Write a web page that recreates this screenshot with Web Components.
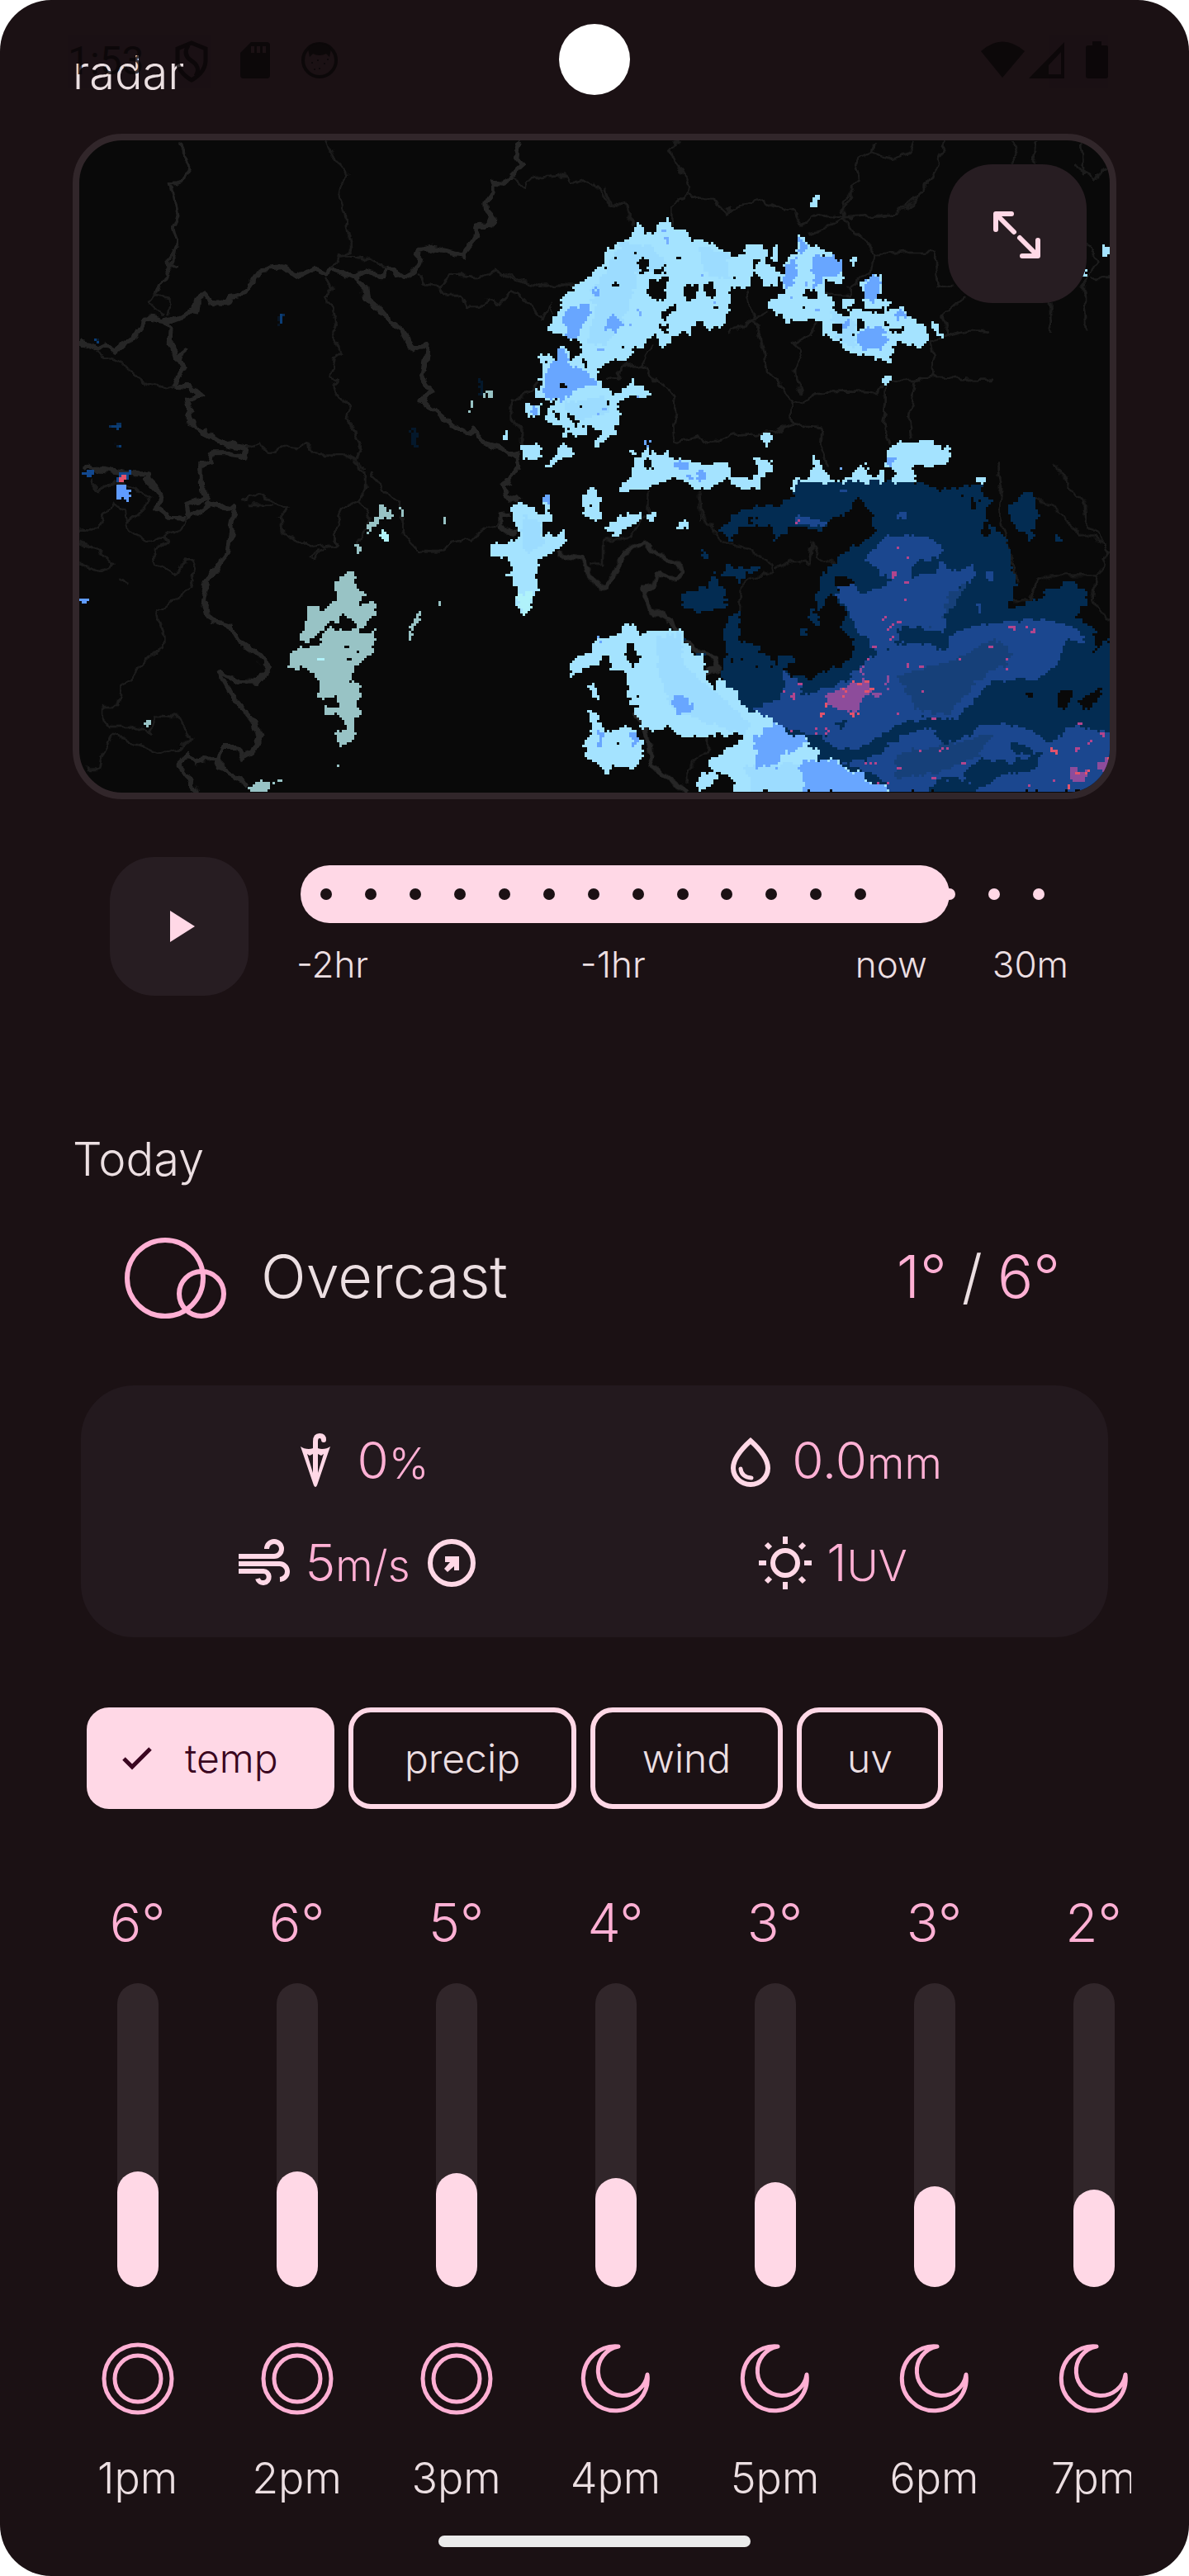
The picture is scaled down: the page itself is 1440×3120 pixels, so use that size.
<!DOCTYPE html>
<html lang="en">
<head>
<meta charset="utf-8">
<meta name="viewport" content="width=device-width, initial-scale=1">
<title>Weather</title>
<style>
  body { margin: 0; background: #ffffff; font-family: Inter, Lato, sans-serif; font-weight: 300; color: #ecdfe2; }
</style>
</head>
<body>
<weather-app>
  <status-bar slot="status"></status-bar>
  <radar-section></radar-section>
  <today-section></today-section>
  <chip-row></chip-row>
  <hour-list></hour-list>
</weather-app>

<script>
const define = (name, html, setup) => {
  customElements.define(name, class extends HTMLElement {
    constructor() {
      super();
      this.attachShadow({ mode: 'open' });
    }
    connectedCallback() {
      this.shadowRoot.innerHTML = '<style>*{box-sizing:border-box}h1,h2,p{margin:0;font-weight:inherit}svg{display:block}button{font:inherit;color:inherit;border:0;padding:0;margin:0}</style>' +
        (typeof html === 'function' ? html(this) : html);
      if (setup) setup(this);
    }
  });
};

/* Shell: rounded screen, status bar and camera above the scrolled content, gesture bar below */
define('weather-app', `
<style>
  :host { display: block; position: relative; overflow: hidden; background: #1b1114; border-radius: 62px; padding: 54px 0 86px; }
  .camera { position: absolute; top: 29px; left: 50%; margin-left: -43px; width: 86px; height: 86px; border-radius: 50%; background: #fff; }
  .home { position: absolute; bottom: 35px; left: 50%; margin-left: -189px; width: 378px; height: 14px; border-radius: 7px; background: #ebebeb; }
</style>
<slot></slot>
<slot name="status"></slot>
<div class="camera"></div>
<div class="home"></div>`);

define('status-bar', `
<style>
  :host { position: absolute; top: 48px; left: 82px; right: 98px; height: 52px; display: flex; align-items: center; color: #090607; font: 48px/52px Roboto, sans-serif; opacity: .8; }
  .icons { display: flex; gap: 38px; margin-left: 36px; }
  .system { display: flex; margin-left: auto; }
</style>
<span>1:53</span>
<div class="icons">
  <svg width="42" height="52" viewBox="0 0 42 52" fill="none" stroke="currentColor" stroke-width="5"><path d="M21 4L38 11V26Q37 40 21 49Q5 40 4 26V11Z"/><path d="M17 7Q10 18 20 25Q33 33 26 44"/></svg>
  <svg width="36" height="52" viewBox="0 0 36 52"><path fill="currentColor" fill-rule="evenodd" d="M13 3H32Q36 3 36 7V43Q36 47 32 47H4Q0 47 0 43V16ZM13 8V16H17V8ZM20 8V16H24V8ZM27 8V16H31V8Z"/></svg>
  <svg width="44" height="52" viewBox="0 0 44 52"><circle cx="22" cy="25" r="20" fill="none" stroke="currentColor" stroke-width="4"/><path fill="currentColor" d="M8 11Q22-2 36 11L34 21L30 17Q22 21 14 17L10 21Z"/><g fill="currentColor"><circle cx="13" cy="28" r="1"/><circle cx="20" cy="25" r="1"/><circle cx="28" cy="29" r="1"/><circle cx="22" cy="35" r="1"/><circle cx="32" cy="24" r="1"/><circle cx="16" cy="36" r="1"/></g></svg>
</div>
<div class="system">
  <svg width="158" height="52" viewBox="0 0 158 52" fill="currentColor"><path d="M4 14Q30-9 57 14L30 46Z"/><path fill-rule="evenodd" d="M105 3V47H62ZM101 15L86 31V42H101Z"/><path d="M139 2H150V7H156Q158 7 158 10V44Q158 47 155 47H134Q131 47 131 44V10Q131 7 134 7H139Z"/></svg>
</div>`);

define('icon-button', el => `
<style>
  :host { display: block; flex: none; width: 168px; height: 168px; }
  button { display: block; width: 100%; height: 100%; background: #271d22; border-radius: 54px; color: #ffd8e6; cursor: pointer; }
</style>
<button aria-label="${el.getAttribute('label')}"><svg width="168" height="168" viewBox="0 0 168 168">${el.getAttribute('kind') === 'play'
  ? '<path fill="currentColor" d="M73 65L103 84L73 103Z"/>'
  : '<path fill="none" stroke="currentColor" stroke-width="6" stroke-linecap="round" stroke-linejoin="round" d="M80 82L59 61M58 79V60H77M87 89L108 110M109 92V111H90"/>'}</svg></button>`);

/* Radar picture: each tile group has its own grid, mapped on to the 1248 x 790 view */
const A = 'translate(-16 -20) scale(.40816 .33333)';
const B = 'translate(504 60) scale(.38265 .33333)';
const C = 'translate(-16 390) scale(.40816 .33333)';
const D = 'translate(504 390) scale(.48469 .33333)';
const E = 'translate(624 -170) scale(.45918 .33333)';
const shape = (t, fill, d) => `<path transform="${t}" fill="${fill}" d="${d}"/>`;
const line = (t, cls, d) => `<path transform="${t}" class="${cls}" d="${d}"/>`;
const specks = (t, fill, w, list) => shape(t, fill, list.trim().split(' ').map(p => { const [x, y] = p.split(','); return `M${x} ${y}h${w}v10h-${w}Z`; }).join(''));

const borders =
  line(A, 'major', 'M1350 63L1335 120L1355 150L1320 190L1300 215L1268 212L1268 250L1248 290L1250 315L1268 340L1258 370L1225 365L1218 415L1200 440L1175 480L1125 462L1085 452L1052 462L1045 500L1025 545L1003 560L958 520L935 550L890 535L855 560L825 545L790 530L770 545L735 525L685 557L640 520L580 525L545 590L520 620L490 630L480 655L425 650L410 622L390 640L385 680L330 705L290 718L240 705L205 780L170 800L145 828L115 805L90 820L40 795M290 718L310 740L308 800L340 860L350 885L322 950L370 955L400 985L360 1000L372 1045L355 1075L400 1110L420 1135L480 1165L535 1180L530 1215L480 1195L435 1195L430 1230L400 1240V1260M350 815L340 860M855 560L885 600L890 640L940 680L960 715L1000 750L1030 820L1072 800L1065 860L1055 920L1080 965L1055 1000L1100 1045L1150 1100L1190 1125L1215 1115L1230 1155L1290 1180L1340 1210L1350 1255') +
  line(C, 'major', 'M400 0L402 100L425 130L360 155L365 205L305 200L270 165L280 110L240 60L240 40L180 40L100 25L70 10L50 25M365 205L425 150L500 165L490 250L480 330L420 430L408 520L430 575L490 595L515 650L560 690L605 745L570 798L510 795L455 760L500 860L560 945L572 1000L555 1050L525 1070L510 1035L460 1035L455 1075L455 1110L540 1170M450 1075L385 1090L365 1065L335 1100L360 1140L385 1200M1350 0L1315 65L1290 85L1310 120L1350 140M1320 185L1285 190L1285 225L1300 250L1340 255') +
  line(D, 'major', 'M150 335L215 350L235 410L270 462L300 400L325 325L370 290L410 340L460 370L470 400L450 425L405 405L395 450L370 460L385 530L440 580L450 610L500 680L550 710L560 745L525 770M345 900L380 990L390 1100L440 1155L480 1200') +
  line(A, 'middle', 'M335 63L368 160L345 205L310 215L335 330L320 380L332 440L320 490L300 550L262 620M335 520L300 500L320 460') +
  line(A, 'minor', 'M262 620L240 640L290 700M262 620L310 630L298 700M770 63L800 130L838 185L810 250L830 330L848 440L835 475L810 480L790 530M835 480L890 490L960 520M770 560L790 600L765 635L785 660L800 730L790 760L818 830L795 850L785 920L805 930L790 960L840 1035L835 1075L855 1110L878 1190L865 1230L880 1255M1040 545L1070 585L1110 595L1140 550L1220 555L1275 535L1330 560L1400 590L1450 585L1520 580M1110 595L1125 625L1170 625L1190 665L1235 665L1255 635L1290 655L1320 605L1350 625L1390 670L1410 710L1435 660L1445 690M1325 190L1360 230L1370 205L1420 190L1490 185L1500 215L1540 205L1568 215M90 830L160 865L230 940L300 960L325 955M535 1175L580 1160L595 1190L640 1175L690 1180L710 1150L745 1205L830 1205L870 1230M1400 940L1370 980L1325 1010L1320 1070L1355 1120L1350 1190') +
  line(C, 'minor', 'M40 245L95 243L110 190L140 150L175 175L185 245L240 290L290 265L300 290L260 320L265 370L325 410L360 350L380 370L370 455L270 540L290 630L290 670L230 720L165 820L155 885L110 885L110 930L130 960L190 960L245 985L270 920L330 925L370 1000L340 1035L280 1055L200 1020L140 990L110 1060L100 1115L60 1115M40 290L90 315L140 370L100 390L40 370M70 60L100 105L150 65L250 130L215 190L180 215M290 265L330 250L360 200M155 430L190 448M525 140L575 115L620 150L660 165L635 200L640 265L690 285L730 310L800 300L800 230L820 165L870 140L890 90L890 60L860 0M770 310L735 350L722 335L750 325M540 155H610M870 140L905 200L880 270L860 300M905 35L940 100L990 150L1000 260L1050 325L1110 325L1150 290L1200 275L1240 240L1285 215') +
  line(B, 'minor', 'M345 0L365 50L405 55L440 125M560 120L560 60L605 10L640 35L690 30L725 85L770 60L850 40L900 65L945 75L965 130L1000 90L1105 100L1155 95L1215 90L1270 85L1320 50L1355 0M1105 100L1100 50L1135 0M990 165L1105 105L1130 150L1170 180L1205 235L1195 290L1120 350L1120 385L1040 380M1205 235L1300 225L1385 225L1400 350L1450 345M1490 380L1410 460L1430 530L1500 510L1568 515M1430 530L1380 550L1390 680L1330 690L1255 690L1235 690L1210 735L1120 730L1020 735L965 780L945 770M1390 680L1568 690M790 365L800 430L820 460L850 580L860 660L900 710L940 760L940 850L1035 860L1030 930L1050 1000M740 520L860 440M500 560L465 635L400 640L390 690L350 680M465 635L500 680L550 730L575 810L560 860L565 915L640 900L675 920L750 895L880 880L940 850M1010 490L1000 530L945 560L970 590L945 660L970 745M1235 700L1235 780L1225 860L1250 920M1330 690L1310 820L1315 910M0 290L50 325L140 350L300 340M485 1100L490 1200M645 1095L650 1200') +
  line(D, 'minor', 'M385 100L380 180L340 270L270 290L270 370L235 365M510 110L515 190L570 290L640 320L690 370L695 400L640 420L610 470L610 560M700 385L740 360L785 370L790 285L805 340L850 370L870 420M1255 0L1265 90L1260 180L1280 300L1300 430M1395 0L1430 80L1470 150L1475 220L1510 270L1530 330L1520 380L1500 410L1390 410L1350 430L1340 500L1290 500M1345 130L1410 180L1450 250L1520 290M1500 410L1490 500L1530 580M530 1000L530 1050L480 1110L475 1170') +
  line(E, 'minor', 'M225 513L195 545L250 680L245 705M735 513L730 555L795 580L830 550L840 513M730 555L690 590L700 650L680 665L680 720L650 770M925 513L905 600L870 690L800 770M1100 513L1120 560L1100 595M1165 513L1160 595M1285 513L1290 640M1265 600L1315 650L1345 610M1200 1100L1205 1200M1300 880L1325 950L1290 1030L1300 1200M1310 1010L1358 1010M0 660L40 745L80 750L105 810');

const rain =
  /* light rain, north */
  shape(B, '#a4e3ff', 'M458 105L470 160L500 155L510 125L550 105L565 140L605 140L615 180L650 180L690 195L745 240L785 235L795 205L850 195L860 225L850 270L900 300L890 345L860 355L835 320L820 270L810 330L790 365L755 355L745 380L735 450L715 502L665 502L655 480L625 490L625 530L600 510L560 545L530 575L512 565L515 510L480 540L470 570L430 575L430 600L400 635L380 610L320 655L325 690L375 745L430 700L455 710L500 740L485 755L405 758L390 790L400 820L375 870L380 900L345 905L320 940L315 920L330 885L290 845L290 890L215 890L210 860L160 835L165 790L200 765L160 760L125 750L125 730L145 725L140 680L150 660L140 600L190 605L210 570L230 590L245 615L275 595L265 540L225 540L200 525L170 520L170 490L205 435L215 380L240 370L320 285L345 285L345 220L385 195L420 175ZM880 200L895 200L895 265L875 250Z') +
  shape(B, '#a4e3ff', 'M955 170L985 170L990 220L1015 205L1050 225L1095 260L1100 320L1085 345L1045 330L1045 385L1065 395L1075 440L1110 455L1140 425L1170 420L1165 370L1155 335L1200 305L1225 320L1225 375L1200 400L1260 400L1235 435L1290 430L1320 465L1370 500L1365 550L1340 575L1265 545L1255 630L1215 620L1180 600L1145 600L1110 585L1035 520L1040 490L1010 470L960 470L925 480L865 430L865 405L920 360L900 320L935 235L955 230ZM1100 400h25v32h-25ZM1130 250l15-8l8 15l-20 15ZM990 45L1025 20L1025 45L1005 65ZM1375 480L1395 490L1418 545L1400 530ZM1220 690L1245 670L1255 690L1240 715ZM835 900L865 882L880 905L855 935ZM95 780h50l-5 40l-20 15l-25-25ZM30 865l15 10v30h-15ZM85 925h62v50h-62ZM210 915L245 940L245 965L200 985L180 1020L160 1000L190 970ZM425 940l20 10l-15 15Z') +
  shape(B, '#a4e3ff', 'M475 915L487 915L487 960L500 960L505 945L520 970L545 945L555 975L610 980L640 985L660 1010L700 990L745 990L740 1040L780 1050L830 1040L830 990L800 970L880 990L875 1025L850 1035L835 1085L770 1085L720 1050L680 1090L640 1090L600 1055L560 1050L500 1070L485 1085L420 1090L405 1110L390 1085L430 1040L440 990L470 960ZM990 1050L1005 1030L1000 955L1035 1005L1070 1060L1100 1055L1145 1010L1175 1010L1195 1050L1230 1015L1235 1060L1250 1055L1265 1015L1240 1010L1235 950L1280 915L1320 920L1380 905L1400 935L1445 935L1435 995L1320 1005L1335 1060L950 1062L950 1100L942 1100L942 1050ZM1165 990l10-22l5 28ZM1520 1050l25-10v15l-20 10Z') +
  /* light rain, centre and south */
  shape(D, '#a4e3ff', 'M120 112L135 115L138 195L150 215L120 225L115 200L125 180ZM215 195L225 95L258 100L262 215L245 215L225 190ZM275 235L320 190L365 180L360 215L325 240L295 270ZM375 210L400 175L405 200L385 215ZM465 210L485 230L450 255ZM65 135L90 170L115 190L120 260L150 265L178 240L170 300L135 340L105 345L108 425L100 480L70 553L52 520L50 425L25 410L40 390L35 345L-14 340L-14 305L55 275L60 240L40 200L38 165ZM345 575L362 625L405 610L465 608L470 650L500 700L522 705L525 770L545 825L560 785L578 790L580 825L605 828L608 865L635 875L635 905L690 912L695 950L725 955L725 990L780 998L780 1035L808 1040L810 1080L865 1080L868 1120L922 1122L925 1162L982 1165L985 1200L608 1200L590 1150L540 1110L535 1080L610 1020L615 985L515 1000L460 995L430 955L415 975L370 970L350 920L335 900L330 800L330 770L290 750L285 700L250 730L195 770L185 780L185 740L200 705L240 690L240 650L290 640ZM235 820L250 805L260 860L250 868ZM220 895L245 905L265 940L270 975L340 965L370 1010L368 1070L345 1110L295 1110L275 1140L262 1100L225 1070L220 1020L240 990L235 930ZM500 1190L515 1125L550 1120L560 1160L530 1175L510 1200Z') +
  shape(B, '#9cdcff', 'M400 190L480 200L540 260L540 310L450 300L420 440L350 560L290 560L320 420L300 380ZM640 200L740 240L740 330L660 300ZM220 770L340 750L370 800L240 850ZM1060 430L1140 480L1140 580L1080 540Z') +
  shape(D, '#9cdcff', 'M400 640L460 620L470 740L520 800L600 900L640 960L620 990L440 900L410 780ZM620 1100L770 1090L775 1196L640 1196ZM65 180L115 230L120 300L80 330L65 300Z') +
  /* moderate rain */
  shape(B, '#68a6ff', 'M215 440L305 405L300 450L280 490L260 540L225 535ZM310 370l15-10v25l-12 5ZM360 460L380 450L390 475L415 480L395 500L380 515L350 505ZM200 575L225 600L240 640L290 660L325 700L240 730L215 770L150 740L160 660L180 630ZM105 790h30l-10 40ZM920 270L960 240L955 300L940 360L905 335ZM1000 235L1050 240L1090 250L1100 300L1040 325L1010 360ZM960 180h20v45h-20ZM1165 330L1200 310L1225 330L1220 375L1195 410L1170 400ZM1150 510L1220 490L1240 545L1225 585L1200 570L1170 585L1145 550ZM1265 445L1300 445L1295 470L1265 470ZM1100 480l25-10v30h-25ZM640 1020l30 10l-5 35l-25-10ZM570 990h40v20h-40ZM605 1040h18v15h-18ZM470 915h17v22h-17ZM1245 970h20v30h-20ZM155 1105h18v30h-18Z') +
  shape(D, '#68a6ff', 'M455 840L490 860L490 910L455 920L443 885ZM690 950L725 960L725 992L775 998L765 1035L720 1060L700 1100L655 1110L650 1040L640 1010ZM760 1085L865 1085L868 1122L922 1125L925 1165L980 1168L982 1200L775 1200ZM255 980l18 0l-5 50l-15-5ZM340 980l22 10l0 35l-25 0ZM255 640h12v15h-12ZM120 115h15v25h-12Z') +
  specks(B, '#74aeff', 10, '515,160 530,170 545,150 540,185 525,145 650,305 690,400 930,380 945,410 1015,430 975,340 450,430 425,480 330,575 440,750 320,800 340,790 1090,1005') +
  /* clear gaps */
  shape(B, '#090909', 'M445 255L485 250L490 300L455 300ZM480 335L515 330L540 310L540 405L500 400L480 370ZM590 350L640 340L640 395L600 400ZM655 345L690 330L695 400L660 375ZM525 440L575 415L575 440L530 470ZM520 490L550 490L545 520L525 510ZM275 620l15 0l0 30l-12 0ZM205 695h22v22h-22ZM230 810L260 830L250 850L230 840ZM185 810h15v25h-15ZM980 370L1020 360L1025 395L975 395ZM1150 425L1230 430L1235 450L1160 440ZM1145 475h22v25h-22ZM1250 505h40v15h-40ZM815 245h22v25h-22ZM1070 490h30v25h-30ZM470 975L500 985V1015L475 1015ZM500 290h30v20h-30Z') +
  specks(B, '#090909', 10, '375,235 438,230 568,242 535,275 540,288 375,338 750,318 660,422 690,422 515,432 450,540 395,568 155,620 185,620 348,768 268,790 230,862 275,862 972,422 1038,235 1088,540 1125,535 1235,475 305,1148 365,205') +
  shape(D, '#090909', 'M325 660h15l20 40l-15 50l-12-30Z') +
  specks(D, '#090909', 9, '350,850 345,880 335,895 412,940 296,1017 138,303 238,155') +
  /* snow field */
  shape(D, '#032c52', 'M750 72L1055 72L1110 100L1160 90L1220 75L1215 110L1235 145L1220 200L1280 280L1300 430L1280 540L1345 500L1430 430L1485 480L1450 570L1495 600L1500 700L1520 640L1545 650L1545 1200L985 1200L982 1165L925 1162L922 1122L868 1120L865 1080L810 1080L808 1040L780 1035L780 998L725 990L725 955L695 950L690 912L635 905L608 865L605 828L580 825L560 760L575 700L570 600L585 560L610 540L610 640L680 700L735 770L790 785L890 715L895 640L860 600L880 550L850 490L830 480L810 540L800 480L820 400L870 330L930 280L950 250L940 180L900 130L880 190L850 190L820 250L800 250L760 230L715 260L700 285L690 230L610 240L585 290L560 240L600 180L675 150L700 165L745 120ZM1285 150L1340 100L1355 190L1340 290L1290 220ZM1400 265h14v22h-14ZM460 480L530 450L545 400L570 460L580 530L500 545L465 520ZM570 380h90v20h-30l-20 45l-10-35h-30ZM780 540l20-10l15 60l-20 10ZM762 600h15v30h-15ZM710 700h35v35h-35ZM510 325l20 5l-5 25ZM465 608L480 640L470 655ZM500 685L520 700L510 705Z') +
  shape(D, '#1b478f', 'M980 270L1060 260L1115 300L1110 350L1150 400L1200 360L1190 430L1130 480L1120 620L1060 600L1000 600L1010 640L960 700L900 600L880 530L850 480L870 420L920 480L990 430L920 350ZM720 760L760 800L770 850L880 790L940 700L1010 660L1130 660L1150 610L1270 580L1370 570L1450 600L1480 670L1430 640L1400 740L1350 790L1240 790L1200 860L1150 930L1060 930L1000 960L900 1050L860 1040L820 1000L720 960L640 900L680 870L720 850ZM930 1080L1000 1000L1090 960L1110 1010L1230 950L1320 960L1390 1020L1440 960L1545 980L1545 1200L1200 1200L1180 1150L1110 1150L1080 1200L985 1200L982 1165L925 1120L870 1090ZM750 190L830 215L825 240L750 220ZM1200 510h15v40h-15ZM1225 400h15v25h-15ZM865 95h14v20h-14ZM1005 180h22v25h-22Z') +
  shape(D, '#164079', 'M1060 620L1120 560L1130 480L1180 440L1150 520ZM1000 780L1140 720L1250 640L1300 700L1200 800L1130 920L1060 900ZM1000 1060L1180 1010L1250 980L1200 1070L1100 1130L1000 1150Z') +
  shape(D, '#032c52', 'M1010 620L1070 630L1065 655L1010 660ZM1085 640L1135 660L1120 690L1085 660ZM1170 1130L1210 1080L1290 1090L1370 1050L1350 1120L1280 1130L1200 1190ZM1045 360L1110 350L1100 400L1040 420ZM940 1030L1010 970L1020 990L960 1060L910 1060ZM1110 1000L1160 960L1210 950L1190 990L1120 1030ZM1290 1020l45 10l10 35l-50-15ZM830 950l50-15l-10 35Z') +
  shape(D, '#090909', 'M1410 825L1450 820L1425 895L1410 890ZM1465 860L1510 810L1515 840L1480 905L1465 900ZM1320 845l20-15l8 30ZM845 420l40-5l20 45l-30-20l-20 30ZM1185 130h14v45h-14ZM1220 225h14v40h-14Z') +
  specks(D, '#090909', 9, '630,205 650,200 1200,105 1210,140 1160,120 590,715 612,708 645,738 690,735') +
  /* mixed precipitation */
  shape(D, '#8d4c9b', 'M825 850L865 820L890 800L930 795L945 830L910 870L905 910L880 905L830 880ZM1435 1100L1480 1130L1475 1165L1440 1165ZM1505 1100L1545 1060L1545 1130L1510 1120ZM940 845h28v8h-28ZM910 740h8v42h-8ZM976 780h8v42h-8Z') +
  specks(D, '#b2458d', 9, '752,207 968,315 1000,305 1026,345 990,400 1026,430 1018,492 1022,545 955,568 982,595 982,635 946,660 930,710 990,740 1026,735 1062,735 1155,715 1235,660 1322,660 1256,598 1278,598 1293,598 1322,598 1344,610 1278,715 1270,745 1062,830 996,912 1062,1040 1112,1040 1127,1040 1142,1040 925,1090 945,1095 1000,1103 1165,1092 1142,1122 1090,1145 1090,1177 735,835 745,825 755,800 718,830 735,855 735,965 800,960 825,970 800,985 820,985 955,1145 980,1158 1330,1165 1090,930 1450,945 1485,1010 1515,990 1395,1145 1000,575 1004,570 970,560 1450,1040') +
  specks(D, '#e2536c', 9, '890,798 905,798 925,798 935,812 925,828 868,820 868,838 890,910 902,905 820,880 808,910 818,918 1438,1010 1430,1175 1395,1050 1385,1045 1527,1075 1450,1120 1475,1130') +
  /* drizzle */
  shape(C, '#98c3c5', 'M852 385L860 430L870 465L888 480L865 515L920 515L922 560L900 560L880 600L870 625L905 618L920 600L910 690L860 745L840 795L865 800L878 850L862 880L880 915L860 925L855 1010L808 1035L805 975L835 975L815 930L810 915L785 920L770 920L770 890L815 890L800 850L760 865L750 850L745 770L720 750L685 752L658 740L660 700L690 672L745 672L765 640L762 608L855 605L870 595L850 570L825 555L780 590L750 605L740 640L715 658L692 630L710 600L720 530L745 515L755 545L790 515L800 480L797 440L830 400ZM935 155L970 185L960 205L940 205L900 260L882 240L925 195ZM991 155h9v32h-9ZM1115 205l20-8l3 15l-15 25ZM855 290L880 310L875 325L855 322ZM1045 535L1058 550L1020 640L1010 648ZM1102 490h10v32h-10ZM790 1105L812 1090L808 1110ZM540 1185L580 1160L597 1165L597 1200L545 1200ZM228 943h26v10h-26ZM610 1165l28-12v8l-25 10Z') +
  specks(C, '#090909', 9, '828,660 855,690 838,712 820,900') +
  shape(C, '#b0f2fa', 'M742 712h18v9h-18ZM925 255l30-5l2 30h-20ZM1340 480L1390 460L1370 540L1352 550Z') +
  shape(A, '#98c3c5', 'M1232 965h9v32h-9ZM1250 965h15v40h-8v-28h-7ZM1197 1008h9v32h-9Z') +
  shape(C, '#12488f', 'M50 32h32v18h-32ZM152 32h35v35h-30Z') + shape(C, '#e2536c', 'M165 42h12v28h-12Z') +
  shape(C, '#5f9bff', 'M152 90l15-10l25 20l-5 35h-35ZM30 492h44l-8 20h-36Z') +
  shape(A, '#0b3d75', 'M130 1095l20-15l18 15l-15 18ZM145 1165h15v9h-15ZM632 695h8v38h-8ZM85 788h13v9h-13Z') +
  shape(A, '#04182b', 'M1020 1110l15-5l15 40l-15 25ZM1225 925h10v60h-10Z') +
  shape(E, '#a4e3ff', 'M1340 895h22v28h-22ZM1290 985h8v15h-8Z');

define('radar-map', `
<style>
  :host { display: block; position: relative; overflow: hidden; border: 8px solid #31262a; border-radius: 60px; background: #090909; }
  svg { width: 100%; height: auto; }
  .major, .middle, .minor { fill: none; vector-effect: non-scaling-stroke; stroke-linejoin: round; }
  .major { stroke: #272727; stroke-width: 6px; }
  .middle { stroke: #202020; stroke-width: 4px; }
  .minor { stroke: #1a1a1a; stroke-width: 3px; }
  ::slotted(*) { position: absolute; top: 29px; right: 28px; }
</style>
<svg viewBox="0 0 1248 790" role="img" aria-label="Rain radar map">
  <defs>
    <filter id="rough" filterUnits="userSpaceOnUse" x="0" y="0" width="1248" height="790"><feTurbulence type="fractalNoise" baseFrequency=".07" numOctaves="2" seed="4"/><feDisplacementMap in="SourceGraphic" scale="12" xChannelSelector="R" yChannelSelector="G"/></filter>
    <filter id="cells" filterUnits="userSpaceOnUse" x="0" y="0" width="1248" height="790" color-interpolation-filters="sRGB">
      <feTurbulence type="fractalNoise" baseFrequency=".12" numOctaves="2" seed="7" result="n"/>
      <feDisplacementMap in="SourceGraphic" in2="n" scale="12" xChannelSelector="R" yChannelSelector="G" result="d"/>
      <feFlood x="1" y="1" width="1" height="1" flood-color="#000" result="f"/>
      <feOffset in="f" x="0" y="0" width="3" height="3"/>
      <feTile result="grid"/>
      <feComposite in="d" in2="grid" operator="in"/>
      <feMorphology operator="dilate" radius="1"/>
    </filter>
  </defs>
  <g filter="url(#rough)">${borders}</g>
  <g filter="url(#cells)" shape-rendering="crispEdges">${rain}</g>
</svg>
<slot></slot>`);

define('time-slider', `
<style>
  :host { display: grid; height: 70px; margin: 0 5px; }
  input, .fill, .dots { grid-area: 1 / 1; }
  .fill { width: 85%; height: 70px; border-radius: 35px; background: #ffd8e6; }
  .dots { display: flex; justify-content: space-between; align-items: center; padding: 0 24px; pointer-events: none; }
  .dots i { width: 14px; height: 14px; border-radius: 50%; background: #1b1114; }
  .dots i.gap { background: none; }
  .dots i.ahead { background: #ffd8e6; }
  input { appearance: none; -webkit-appearance: none; width: 100%; height: 70px; margin: 0; background: transparent; cursor: pointer; }
  input::-webkit-slider-thumb { -webkit-appearance: none; width: 62px; height: 70px; background: transparent; }
</style>
<div class="fill"></div>
<div class="dots">${Array.from({ length: 17 }, (_, i) => `<i class="${i < 13 ? '' : i === 13 ? 'gap' : 'ahead'}"></i>`).join('')}</div>
<input type="range" min="0" max="16" value="13" aria-label="Radar time">`);

define('radar-section', `
<style>
  :host { display: block; padding: 0 88px; }
  h2 { font-size: 56px; line-height: 68px; margin-bottom: 40px; }
  .controls { display: flex; align-items: flex-start; gap: 58px; margin: 70px 58px 0 45px; }
  .timeline { flex: 1; padding-top: 10px; }
  .labels { display: grid; grid-template-columns: 346fr 335fr 167fr 87fr; margin-top: 22px; font-size: 44px; line-height: 56px; }
  .labels span { white-space: nowrap; }
</style>
<h2>radar</h2>
<radar-map><icon-button kind="expand" label="Expand map"></icon-button></radar-map>
<div class="controls">
  <icon-button kind="play" label="Play"></icon-button>
  <div class="timeline">
    <time-slider></time-slider>
    <div class="labels"><span>-2hr</span><span>-1hr</span><span>now</span><span>30m</span></div>
  </div>
</div>`);

const statIcons = {
  chance: '<path d="M36 22V13Q36 6 41 6Q46 6 46 11" fill="none" stroke="currentColor" stroke-width="6" stroke-linecap="round"/><path fill="currentColor" fill-rule="evenodd" d="M18 19Q22 22 28 22Q33 22 36 19Q39 22 44 22Q50 22 54 19L38 66Q36 70 34 66ZM26 28L33 51V28L29 30ZM46 28L39 51V28L43 30Z"/>',
  rain: '<path d="M36 12Q57 31 57 45A21 20 0 0 1 15 45Q15 31 36 12Z" fill="none" stroke="currentColor" stroke-width="6"/><path d="M24 46Q25 56 37 57" fill="none" stroke="currentColor" stroke-width="5" stroke-linecap="round"/>',
  wind: '<g fill="none" stroke="currentColor" stroke-width="6"><path d="M6 28H49A9 9 0 1 0 40 19"/><path d="M6 37H55A9 9 0 0 1 56 56"/><path d="M6 46H36A7 7 0 1 1 29 55"/></g>',
  heading: '<circle cx="36" cy="36" r="26" fill="none" stroke="currentColor" stroke-width="6"/><path fill="currentColor" d="M28 28H45V45H39V40L31 47L27 43L34 35H28Z"/>',
  uv: '<g fill="none" stroke="currentColor" stroke-width="6"><circle cx="36" cy="36" r="15"/><path d="M36 4V13M36 59V68M4 36H13M59 36H68M13 13L18 18M54 54L59 59M59 13L54 18M18 54L13 59"/></g>'
};
define('weather-stat', el => `
<style>
  :host { flex: 1; display: flex; align-items: center; justify-content: center; gap: 14px; color: #ffd8e6; }
  p { color: #ffb0d4; font-size: 62px; line-height: 72px; white-space: nowrap; }
  small { font-size: 52px; line-height: 1px; }
  svg { flex: none; }
</style>
<svg width="72" height="72" viewBox="0 0 72 72">${statIcons[el.getAttribute('icon')]}</svg>
<p>${el.getAttribute('value')}<small>${el.getAttribute('unit')}</small></p>
${el.getAttribute('icon') === 'wind' ? `<svg width="72" height="72" viewBox="0 0 72 72">${statIcons.heading}</svg>` : ''}`);

define('today-section', `
<style>
  :host { display: block; padding: 164px 88px 0; }
  h2 { font-size: 56px; line-height: 68px; }
  .summary { display: flex; align-items: center; gap: 40px; margin: 56px 68px 0 60px; font-size: 72px; line-height: 104px; }
  .range { display: flex; gap: 18px; margin-left: auto; }
  .range b { font-weight: inherit; color: #ffb0d4; }
  .card { margin: 80px 10px 0; padding: 55px 48px 54px; border-radius: 64px; background: #23191e; }
  .row { display: flex; }
  .row + .row { margin-top: 52px; }
</style>
<h2>Today</h2>
<div class="summary">
  <svg width="128" height="104" viewBox="0 0 128 104" fill="none" stroke="#ffb0d4" stroke-width="6"><circle cx="52" cy="54" r="46"/><circle cx="96" cy="73" r="27"/></svg>
  <span>Overcast</span>
  <div class="range"><b>1°</b><span>/</span><b>6°</b></div>
</div>
<div class="card">
  <div class="row"><weather-stat icon="chance" value="0" unit="%"></weather-stat><weather-stat icon="rain" value="0.0" unit="mm"></weather-stat></div>
  <div class="row"><weather-stat icon="wind" value="5" unit="m/s"></weather-stat><weather-stat icon="uv" value="1" unit="UV"></weather-stat></div>
</div>`);

define('chip-row', `
<style>
  :host { display: flex; gap: 17px; padding: 85px 105px 0; }
  button { display: flex; align-items: center; justify-content: center; gap: 36px; height: 123px; border: 6px solid #ffd8e6; border-radius: 27px; background: transparent; font-size: 48px; line-height: 60px; cursor: pointer; }
  button[aria-pressed=true] { background: #ffd8e6; color: #3a0620; }
  .l { width: 300px; justify-content: flex-start; padding-left: 33px; } .m { width: 276px; } .s { width: 233px; } .xs { width: 177px; }
</style>
<button class="l" aria-pressed="true"><svg width="44" height="44" viewBox="0 0 44 44" fill="none" stroke="currentColor" stroke-width="5"><path d="M6 22L16 32L38 10"/></svg>temp</button>
<button class="m" aria-pressed="false">precip</button>
<button class="s" aria-pressed="false">wind</button>
<button class="xs" aria-pressed="false">uv</button>`, el => {
  const buttons = el.shadowRoot.querySelectorAll('button');
  buttons.forEach(b => b.addEventListener('click', () => buttons.forEach(o => o.setAttribute('aria-pressed', o === b))));
});

define('hour-column', el => `
<style>
  :host { flex: none; width: 193px; display: flex; flex-direction: column; align-items: center; }
  .temp { color: #ffb0d4; font-size: 64px; line-height: 76px; }
  .track { display: flex; align-items: flex-end; width: 50px; height: 368px; margin: 35px 0 63px; border-radius: 25px; background: #31262a; }
  .level { width: 100%; border-radius: 25px; background: #ffd8e6; }
  .hour { margin-top: 41px; font-size: 52px; line-height: 64px; }
</style>
<span class="temp">${el.getAttribute('temp')}°</span>
<div class="track"><div class="level" style="height:${el.getAttribute('level')}px"></div></div>
<svg width="96" height="96" viewBox="0 0 96 96" fill="none" stroke="#ffb0d4" stroke-width="5" stroke-linejoin="round">${el.hasAttribute('night')
  ? '<path d="M51 9A39 39 0 1 0 86 43A30 30 0 1 1 51 9Z"/>'
  : '<circle cx="48" cy="48" r="41"/><circle cx="48" cy="48" r="28"/>'}</svg>
<span class="hour">${el.getAttribute('hour')}</span>`);

define('hour-list', `
<style>:host { display: flex; overflow: hidden; margin: 100px 70px 0; }</style>` +
  [['1pm', 6, 140], ['2pm', 6, 140], ['3pm', 5, 138], ['4pm', 4, 132, 1], ['5pm', 3, 127, 1], ['6pm', 3, 122, 1], ['7pm', 2, 118, 1]]
    .map(([hour, temp, level, night]) => `<hour-column hour="${hour}" temp="${temp}" level="${level}"${night ? ' night' : ''}></hour-column>`).join(''));
</script>
</body>
</html>
